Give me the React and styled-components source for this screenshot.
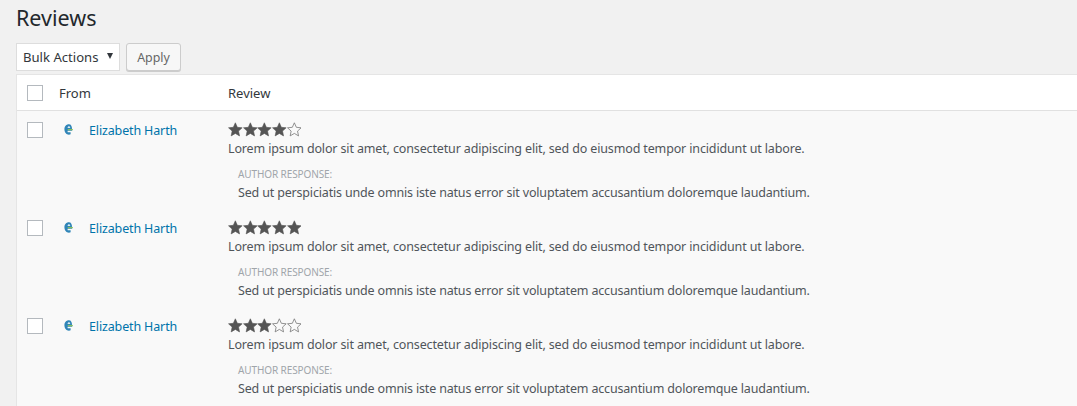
import React from "react";
import styled, { createGlobalStyle } from "styled-components";

const GlobalStyle = createGlobalStyle`
  html, body {
    margin: 0;
    padding: 0;
    background: #f1f1f1;
    overflow: hidden;
  }
  body {
    font-family: "Noto Sans", "Open Sans", sans-serif;
    font-size: 13px;
    color: #444;
  }
`;

const Page = styled.div`
  height: 406px;
  padding: 0 0 0 16px;
  overflow: hidden;
`;

const Title = styled.h1`
  margin: 0;
  height: 43px;
  padding-top: 2px;
  box-sizing: border-box;
  font-size: 21.5px;
  line-height: 31px;
  font-weight: 400;
  color: #23282d;
`;

const Toolbar = styled.div`
  display: flex;
  gap: 6px;
  height: 32px;
`;

const Select = styled.div`
  width: 104px;
  height: 28px;
  box-sizing: border-box;
  background: #fff;
  border: 1px solid #ddd;
  display: flex;
  align-items: center;
  justify-content: space-between;
  padding: 0 6px 0 6px;
  color: #32373c;
  font-size: 13.1px;
`;

const Caret = styled.span`
  width: 0;
  height: 0;
  border-left: 3px solid transparent;
  border-right: 3px solid transparent;
  border-top: 6px solid #32373c;
  margin-top: -3px;
`;

const ApplyButton = styled.button`
  width: 55px;
  height: 28px;
  box-sizing: border-box;
  padding: 0;
  background: #f7f7f7;
  border: 1px solid #ccc;
  border-radius: 3px;
  box-shadow: 0 1px 0 #ccc;
  color: #666;
  font: inherit;
  font-size: 12.4px;
`;

const Table = styled.div`
  background: #f9f9f9;
  border: 1px solid #e5e5e5;
  border-right: 0;
  border-bottom: 0;
  margin-top: -1px;
  padding-bottom: 30px;
`;

const HeadRow = styled.div`
  display: grid;
  grid-template-columns: 42px 169px 1fr;
  height: 35px;
  align-items: center;
  background: #fff;
  border-bottom: 1px solid #e1e1e1;
  color: #32373c;
`;

const ReviewRow = styled.div`
  display: grid;
  grid-template-columns: 42px 30px 139px 1fr;
  height: 98px;
  box-sizing: border-box;
  padding-top: 11px;
  align-items: start;
  font-size: 12.5px;
  letter-spacing: -0.14px;
`;

const Check = styled.span`
  display: block;
  width: 16px;
  height: 16px;
  box-sizing: border-box;
  margin-left: 10px;
  background: #fff;
  border: 1px solid #b4b9be;
`;

const AvatarCell = styled.div`
  padding: 1px 0 0 4px;
`;

const NameLink = styled.a`
  color: #0073aa;
  line-height: 17px;
`;

const Stars = styled.div`
  display: flex;
  height: 18px;
`;

const Text = styled.p`
  margin: 0;
  line-height: 18px;
  white-space: nowrap;
  color: #50555a;
`;

const Response = styled.div`
  padding: 9px 0 0 10px;
  letter-spacing: -0.17px;
`;

const ResponseLabel = styled.div`
  font-size: 10px;
  letter-spacing: -0.1px;
  line-height: 14px;
  height: 17px;
  color: #a0a5aa;
  text-transform: uppercase;
`;

const STAR_PATH = "M7.3 .8l2 4.5 4.8.5-3.6 3.3 1 4.8-4.2-2.5-4.2 2.5 1-4.8L.5 5.8l4.8-.5z";

const Star = ({ filled }) => (
  <svg width="14.7" height="15" viewBox="0 0 14.6 15">
    <path
      d={STAR_PATH}
      fill={filled ? "#555" : "none"}
      stroke={filled ? "#555" : "#777"}
      strokeWidth={filled ? 0.6 : 0.8}
      strokeLinejoin="round"
    />
  </svg>
);

const Avatar = () => (
  <svg width="11" height="13" viewBox="0 0 14 16">
    <path d="M7.5 1.2C4 1.2 1.800 4 1.800 7.800s2.200 6.800 5.800 6.800c.8 0 1.500-.1 2.100-.4V11.600H6c-.4-1 0-2 0-2h5.500V7.400C11.500 3.800 10.400 1.200 7.500 1.200z" fill="#1a78b0" opacity="0.9" />
    <path d="M5.800 6c.1-1.100.9-2 1.800-2s1.500.9 1.600 2z" fill="#dcebf2" />
    <rect x="6" y="7.300" width="6.500" height="1.700" fill="#86bf62" />
  </svg>
);

const reviews = [{ rating: 4 }, { rating: 5 }, { rating: 3 }];

export default function App() {
  return (
    <Page>
      <GlobalStyle />
      <Title>Reviews</Title>
      <Toolbar>
        <Select>
          Bulk Actions
          <Caret />
        </Select>
        <ApplyButton>Apply</ApplyButton>
      </Toolbar>
      <Table>
        <HeadRow>
          <Check />
          <span>From</span>
          <span>Review</span>
        </HeadRow>
        {reviews.map((review, i) => (
          <ReviewRow key={i}>
            <Check />
            <AvatarCell>
              <Avatar />
            </AvatarCell>
            <NameLink>Elizabeth Harth</NameLink>
            <div>
              <Stars>
                {[1, 2, 3, 4, 5].map((n) => (
                  <Star key={n} filled={n <= review.rating} />
                ))}
              </Stars>
              <Text>
                Lorem ipsum dolor sit amet, consectetur adipiscing elit, sed do eiusmod tempor incididunt ut labore.
              </Text>
              <Response>
                <ResponseLabel>Author response:</ResponseLabel>
                <Text>
                  Sed ut perspiciatis unde omnis iste natus error sit voluptatem accusantium doloremque laudantium.
                </Text>
              </Response>
            </div>
          </ReviewRow>
        ))}
      </Table>
    </Page>
  );
}
